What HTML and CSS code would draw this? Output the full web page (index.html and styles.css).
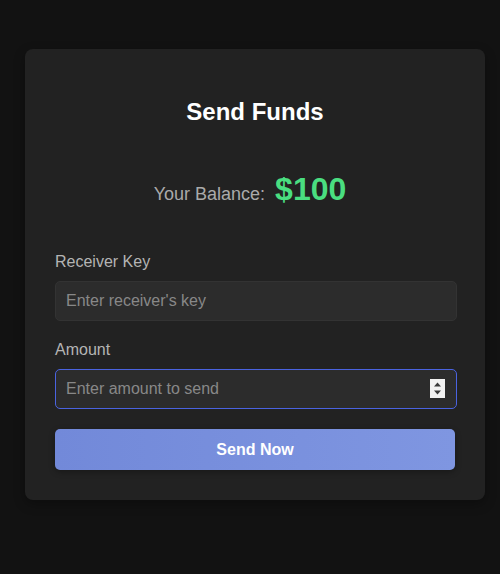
FILE: index.html
```html
<!DOCTYPE html>
<html>
<head>
<meta charset="utf-8">
<link rel="stylesheet" href="styles.css">
</head>
<body>
<div class="card">
  <h2 class="title">Send Funds</h2>
  <div class="balance">
    <span class="balance-label">Your Balance:</span>
    <span class="balance-value">$100</span>
  </div>
  <div class="field">
    <label class="label">Receiver Key</label>
    <input class="input" type="text" placeholder="Enter receiver's key">
  </div>
  <div class="field">
    <label class="label">Amount</label>
    <div class="input-wrap">
      <input class="input input-focus" type="text" placeholder="Enter amount to send">
      <span class="spin">
        <svg width="15" height="19" viewBox="0 0 15 19">
          <rect width="15" height="19" fill="#f2f2f2"/>
          <path d="M7.5 3.5 L11 7.5 H4 Z" fill="#3a3a3a"/>
          <path d="M4 11.5 H11 L7.5 15.5 Z" fill="#3a3a3a"/>
        </svg>
      </span>
    </div>
  </div>
  <button class="btn">Send Now</button>
</div>
</body>
</html>
```
FILE: styles.css
```css
html, body {
  margin: 0;
  padding: 0;
  background: #121212;
  font-family: "Liberation Sans", Arial, sans-serif;
}
body {
  padding-top: 49px;
  height: 574px;
  box-sizing: border-box;
}
.card {
  margin-left: 25px;
  width: 460px;
  box-sizing: border-box;
  padding: 30px;
  background: #222222;
  border-radius: 8px;
  box-shadow: 0 4px 12px rgba(0,0,0,0.3);
}
.title {
  margin: 19px 0 44px;
  font-size: 24px;
  line-height: 28px;
  font-weight: bold;
  color: #ffffff;
  text-align: center;
}
.balance {
  display: flex;
  justify-content: center;
  align-items: center;
  gap: 10px;
  height: 40px;
  margin-bottom: 42px;
  padding-right: 10px;
}
.balance-label {
  font-size: 18px;
  color: #aaaaaa;
  position: relative;
  top: 4px;
}
.balance-value {
  font-size: 32px;
  font-weight: bold;
  color: #4ade80;
  position: relative;
  top: -1px;
}
.field {
  display: flex;
  flex-direction: column;
  gap: 9px;
  margin-bottom: 19px;
}
.field + .field {
  margin-bottom: 20px;
}
.label {
  font-size: 16px;
  line-height: 20px;
  color: #b4b4b4;
}
.input-wrap {
  position: relative;
}
.input {
  display: block;
  width: 402px;
  height: 40px;
  box-sizing: border-box;
  padding: 0 10px;
  background: #2c2c2c;
  border: 1px solid #333333;
  border-radius: 5px;
  font-family: "Liberation Sans", Arial, sans-serif;
  font-size: 16px;
  color: #eeeeee;
  outline: none;
}
.input::placeholder {
  color: #888888;
}
.input-focus {
  border-color: #4a63e0;
}
.spin {
  position: absolute;
  right: 10px;
  top: 10px;
  width: 15px;
  height: 19px;
  display: block;
}
.spin svg {
  display: block;
}
.btn {
  display: block;
  width: 400px;
  height: 41px;
  border: none;
  border-radius: 5px;
  background: linear-gradient(90deg, #7289d9, #7f96e1);
  color: #ffffff;
  font-family: "Liberation Sans", Arial, sans-serif;
  font-size: 16px;
  font-weight: bold;
  box-shadow: 0 2px 6px rgba(0,0,0,0.3);
}
```
